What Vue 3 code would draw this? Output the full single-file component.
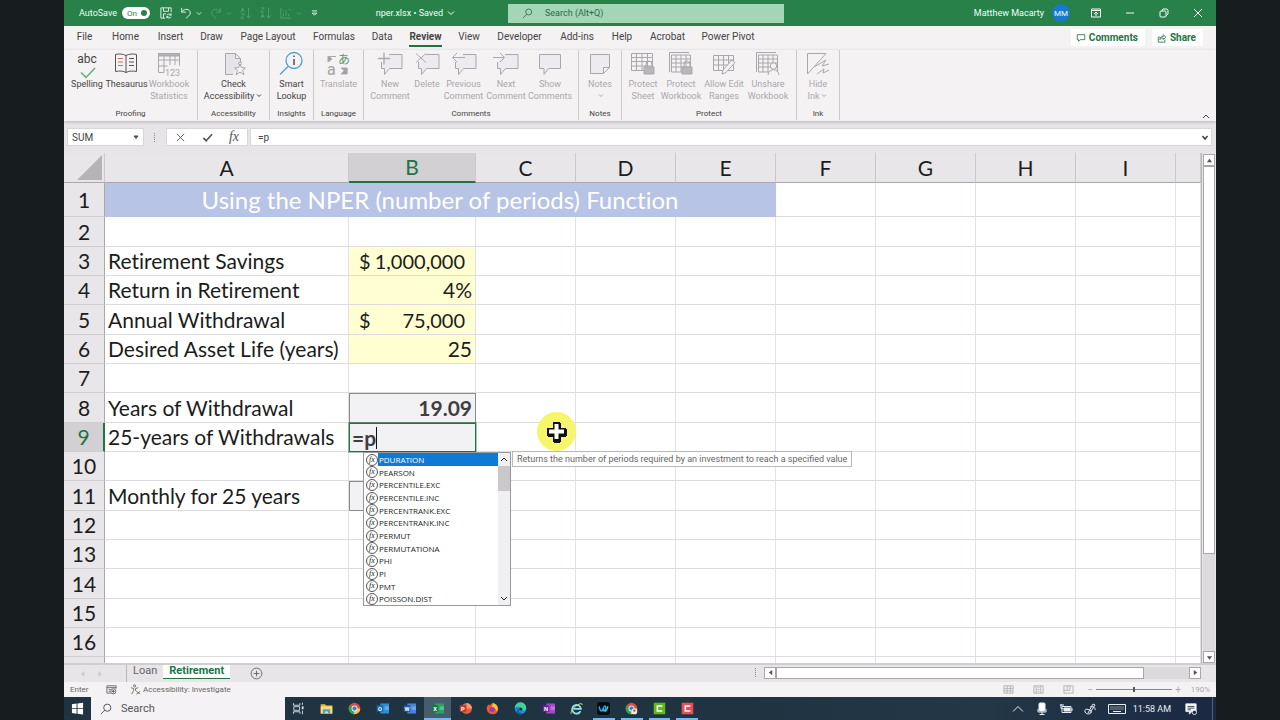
<script setup>
import { ref } from 'vue'

const tabs = ['File', 'Home', 'Insert', 'Draw', 'Page Layout', 'Formulas', 'Data', 'Review', 'View', 'Developer', 'Add-ins', 'Help', 'Acrobat', 'Power Pivot']

const bubble = '<path d="M3.500 4.500h21v14h-12l-4.500 6v-6H3.500z" fill="#ececf0"/>'
const bubbleCut = '<path d="M13 4.500h13v14H13.500l-5 6v-6H5.500V12" fill="#ececf0"/>'
const sheet = '<path d="M2.500 3.500h21v17h-21zM2.500 7.500h21M2.500 11.500h21M2.500 16h21M7.500 3.500v17M13 3.500v17M18.500 3.500v17"/>'
const lock = '<path d="M17 17v-3a3 3 0 0 1 6 0v3"/><path d="M15 17h10v7H15z" fill="#b9b7ba"/>'

const art = {
  check: '<path d="M7 4.500l5 5L21 0" stroke="#5fae7d" stroke-width="1.500"/>',
  book: '<g stroke="#555"><path d="M13 5.500C10 4 6 3.500 2.500 4.500v17c4-.8 8-.5 10.500 1 2.500-1.500 6.500-1.800 10.500-1v-17C20 3.500 16 4 13 5.500zM13 5.500v17"/><path d="M16 8.500h5M16 12h5M16 15.500h5"/></g><path d="M5 8.500h5M5 12h5M5 15.500h5" stroke="#d06a70"/>',
  stats: '<path d="M3.500 22.500v-19h21v12M3.500 10h21M3.500 16h9M9 6v16.500H3.500M15 6v9M20 6v9"/><path d="M3.500 3.500h21v2.500h-21z" fill="#b5b3b6"/><text x="10" y="26" font-size="9" fill="#aaa8ab" stroke="none">123</text>',
  access: '<path d="M13 24.500H5.500v-21h10l5 5V13M15.500 3.500v5h5" fill="#e6e4e8"/><path d="M20 14.500l1.500 3.200 4 .2-3 2.500 1.500 4.300-4-2.500-4 2.500 1.500-4.300-3-2.500 4-.2z" fill="#f5f2f3"/><circle cx="20" cy="13.500" r="1.500"/>',
  lookup: '<g stroke="#4c9fd0" stroke-width="1.300"><circle cx="16" cy="10.500" r="8"/><path d="M10 16.500L2 24.500"/></g><path d="M16 9v6M16 5.500v1.500" stroke="#444" stroke-width="1.400"/>',
  translate: '<text x="13" y="14" font-size="12" fill="#5c9771" stroke="none">あ</text><text x="2" y="25" font-size="16" fill="#a3a1a4" stroke="none">a</text><path d="M3 6.500h8M3 6l4 3-4 3zM16 18h6v6M16 24l6-6v6z" fill="#a3a1a4"/>',
  newC: bubbleCut + '<path d="M2 8.500h12M8 2.500v12" stroke-width="1.300"/>',
  delC: bubbleCut + '<path d="M3 3.500l10 9M13 3.500l-10 9"/>',
  prevC: bubbleCut + '<path d="M15 7.500H3M7 3L2.500 7.500 7 12"/>',
  nextC: bubbleCut + '<path d="M1 7.500h11M8 3l4.500 4.500L8 12"/>',
  showC: bubble,
  note: '<path d="M4.500 4.500h19v13l-6 6h-13zM23.500 17.500h-6v6" fill="#ececf0"/>',
  pSheet: sheet + lock,
  pBook: '<path d="M2.500 22V2.500H22"/><g><path d="M4.500 5h19v17h-19zM4.500 9h19M4.500 13h19M4.500 17h19M9 5v17M14 5v17M19 5v17"/></g>' + lock,
  ranges: '<path d="M3.500 5.500h20v15h-20zM3.500 10h20M3.500 15h20M8.500 5.500v15M13.500 5.500v15M18.500 5.500v15"/><path d="M12 24l1-4L22 10l3 2.500-9 10z" fill="#f5f2f3"/>',
  unshare: '<path d="M2.500 22V2.500H22"/><path d="M4.500 5h19v17h-19zM4.500 9h19M4.500 13h19M4.500 17h19M9 5v17M14 5v17M19 5v17"/><circle cx="19.500" cy="16" r="3.200" fill="#f5f2f3"/><path d="M14 25c.5-7 10.500-7 11 0" fill="#f5f2f3"/>',
  ink: '<path d="M3.500 24V3.500H22L3.500 24M10 17l12-7-4 6 7-2M13 24l7-5-1 4 6-3"/>'
}

const groups = [
  { id: 'proofing', label: 'Proofing', items: [
    { icon: 'check', lines: ['Spelling'], abc: true, on: true },
    { icon: 'book', lines: ['Thesaurus'], on: true },
    { icon: 'stats', lines: ['Workbook', 'Statistics'] }] },
  { id: 'access', label: 'Accessibility', items: [{ icon: 'access', lines: ['Check', 'Accessibility'], on: true, drop: true }] },
  { id: 'insights', label: 'Insights', items: [{ icon: 'lookup', lines: ['Smart', 'Lookup'], on: true }] },
  { id: 'language', label: 'Language', items: [{ icon: 'translate', lines: ['Translate'] }] },
  { id: 'comments', label: 'Comments', items: [
    { icon: 'newC', lines: ['New', 'Comment'] },
    { icon: 'delC', lines: ['Delete'] },
    { icon: 'prevC', lines: ['Previous', 'Comment'] },
    { icon: 'nextC', lines: ['Next', 'Comment'] },
    { icon: 'showC', lines: ['Show', 'Comments'] }] },
  { id: 'notes', label: 'Notes', items: [{ icon: 'note', lines: ['Notes', ''], drop: true }] },
  { id: 'protect', label: 'Protect', items: [
    { icon: 'pSheet', lines: ['Protect', 'Sheet'] },
    { icon: 'pBook', lines: ['Protect', 'Workbook'] },
    { icon: 'ranges', lines: ['Allow Edit', 'Ranges'] },
    { icon: 'unshare', lines: ['Unshare', 'Workbook'] }] },
  { id: 'ink', label: 'Ink', items: [{ icon: 'ink', lines: ['Hide', 'Ink'], drop: true }] }
]

const cols = ['A', 'B', 'C', 'D', 'E', 'F', 'G', 'H', 'I', '']
const rows = [
  { n: 2 },
  { n: 3, a: 'Retirement Savings', b: '1,000,000', kind: 'input', money: true },
  { n: 4, a: 'Return in Retirement', b: '4%', kind: 'input' },
  { n: 5, a: 'Annual Withdrawal', b: '75,000', kind: 'input', money: true },
  { n: 6, a: 'Desired Asset Life (years)', b: '25', kind: 'input' },
  { n: 7 },
  { n: 8, a: 'Years of Withdrawal', b: '19.09', kind: 'result' },
  { n: 9, a: '25-years of Withdrawals', kind: 'edit' },
  { n: 10 },
  { n: 11, a: 'Monthly for 25 years', kind: 'result' },
  { n: 12 }, { n: 13 }, { n: 14 }, { n: 15 }, { n: 16 }, { n: '' }
]
const functions = ['PDURATION', 'PEARSON', 'PERCENTILE.EXC', 'PERCENTILE.INC', 'PERCENTRANK.EXC', 'PERCENTRANK.INC', 'PERMUT', 'PERMUTATIONA', 'PHI', 'PI', 'PMT', 'POISSON.DIST']
const formula = ref('=p')

const letter = (back, front, ch) => `<path d="M6 2h12v14H6z" fill="${back}"/><path d="M12 6h6v5h-6z" fill="#fff" opacity=".25"/><path d="M1 4.500h9v9H1z" fill="${front}"/><text x="5.500" y="12" font-size="8" font-weight="bold" text-anchor="middle" fill="#fff">${ch}</text>`
const chrome = '<circle cx="9" cy="9" r="8" fill="#e8473c"/><path d="M9 9L2 5a8 8 0 0 0 6 12z" fill="#2fa350"/><path d="M9 9h8a8 8 0 0 1-9 8z" fill="#f8c630"/><circle cx="9" cy="9" r="4" fill="#fff"/><circle cx="9" cy="9" r="3" fill="#3c7de0"/>'
const apps = [
  { name: 'Task View', svg: '<path d="M2 1.500v3h9v-3M2 16.500v-3h9v3M2.500 6.500h8v5h-8zM14.500 1v3M14.500 12v5" fill="none" stroke="#dfe5e8" stroke-width="1.200"/><path d="M13.500 6h2.500v4h-2.500z" fill="#dfe5e8"/>' },
  { name: 'File Explorer', svg: '<path d="M1 3h6l1.500 2H17v11H1z" fill="#e9b93e"/><path d="M1 6h16v10H1z" fill="#fbdc78"/><path d="M4 16v-6h10v6h-3v-3H7v3z" fill="#4a9fd6"/>' },
  { name: 'Chrome', svg: chrome },
  { name: 'Outlook', svg: letter('#2a8fd8', '#1068b5', 'O') },
  { name: 'Word', svg: letter('#3f86dc', '#1b56b0', 'W') },
  { name: 'Excel', svg: letter('#27a468', '#127a3e', 'X'), active: true },
  { name: 'PowerPoint', svg: '<circle cx="10.500" cy="9" r="7.500" fill="#dd6240"/><path d="M10.500 1.500V9H18a7.500 7.500 0 0 0-7.500-7.500z" fill="#f29a7d"/><path d="M1 4.500h9v9H1z" fill="#bd3b20"/><text x="5.500" y="12" font-size="8" font-weight="bold" text-anchor="middle" fill="#fff">P</text>' },
  { name: 'Firefox', svg: '<path d="M9 17a8 8 0 0 1-7.500-11L4 3l1 2 4-4 2 3 3-1c5 6 3 14-5 14z" fill="#f4562d"/><path d="M10 1c6 3 8 8 5 12-2-4-4-6-7-6z" fill="#fdc52e"/><circle cx="8.500" cy="10.500" r="3.500" fill="#8b3fc4"/>' },
  { name: 'Edge', svg: '<circle cx="9" cy="9" r="8" fill="#1b8fd3"/><path d="M1 8a8 8 0 0 1 16 1c0 3-4 4-6 2 1-4-5-6-10-3z" fill="#45cf9b"/><path d="M7 9c-2 4 2 8 7 6.500A8 8 0 0 1 4 15C3 12 5 9 7 9z" fill="#0d5fae"/><circle cx="9.500" cy="10" r="2" fill="#1d3441"/>' },
  { name: 'OneNote', svg: letter('#a647cc', '#761aa3', 'N') },
  { name: 'Internet Explorer', svg: '<path d="M14.500 12.500a6 6 0 1 1 .5-3H5" fill="none" stroke="#8fdcf4" stroke-width="2.600"/><path d="M2 16.500C0 15 3 10 8 6s9-5 9-2" fill="none" stroke="#e5d878" stroke-width="1.300"/>' },
  { name: 'Webex', svg: '<rect x="0" y="0" width="18" height="18" rx="4" fill="#080d14"/><path d="M3 6c1 8 5 8 6 3s4-4 3 0-4 4-5 0" fill="none" stroke="#29a0ee" stroke-width="2"/><path d="M9 11c2 3 5 1 6-5" fill="none" stroke="#41cfbe" stroke-width="2"/>', open: true },
  { name: 'Chrome profile', svg: chrome + '<circle cx="13" cy="13" r="4" fill="#f0e6dc"/><circle cx="13" cy="12" r="1.500" fill="#8b5b3e"/>', open: true },
  { name: 'Camtasia', svg: '<path d="M1 1h16v16H1z" fill="#62b815"/><path d="M13 5.500H6v7h7" fill="none" stroke="#fff" stroke-width="2.200"/>', open: true },
  { name: 'Recorder', svg: '<path d="M1 1h16v16H1z" fill="#ea4d55"/><path d="M13 5.500H6v7h7" fill="none" stroke="#fff" stroke-width="2.200"/>', open: true }
]
</script>

<template>
  <div class="desktop">
    <main class="window">
      <header class="titlebar">
        <div class="quick">
          <label class="autosave">AutoSave
            <span class="switch"><input type="checkbox" checked />On<i></i></span>
          </label>
          <button aria-label="Save"><svg viewBox="0 0 14 14"><path d="M1 1h12v5M1 1v12h5M4 1v4h6V1M4 13V8h3M8 9.500a3 3 0 0 1 5 0M13 7.500v2h-2M13 11.500a3 3 0 0 1-5 0M8 13v-2h2" /></svg></button>
          <button aria-label="Undo" class="undo"><svg viewBox="0 0 14 14"><path d="M2 1v5h5M2 6c3-5 10-4 10 1 0 3-3 4-5 6" /></svg></button>
          <button aria-label="Undo list" class="mini"><svg viewBox="0 0 8 8"><path d="M1 3l3 3 3-3" /></svg></button>
          <button aria-label="Redo" class="faint"><svg viewBox="0 0 14 14"><path d="M12 1v5H7M12 6C9 1 2 2 2 7c0 3 3 4 5 6" /></svg></button>
          <button aria-label="Redo list" class="mini faint"><svg viewBox="0 0 8 8"><path d="M1 3l3 3 3-3" /></svg></button>
          <button aria-label="Sort ascending" class="faint"><svg viewBox="0 0 14 14"><path d="M1 6l2-5 2 5M2 4h2M1 8h4l-4 5h4M10 1v12M7.500 10l2.500 3 2.500-3" /></svg></button>
          <button aria-label="Sort descending" class="faint"><svg viewBox="0 0 14 14"><path d="M1 1h4L1 6h4M1 13l2-5 2 5M2 11h2M10 1v12M7.500 10l2.500 3 2.500-3" /></svg></button>
          <button aria-label="Chart" class="faint"><svg viewBox="0 0 14 14"><path d="M1 1v12h12M4 11V7M7 11V4M10 11V8M4 4h1M10 3h2" /></svg></button>
          <button aria-label="Chart list" class="mini faint"><svg viewBox="0 0 8 8"><path d="M1 3l3 3 3-3" /></svg></button>
          <button aria-label="Customize toolbar" class="custom"><svg viewBox="0 0 8 8"><path d="M1 1h6M1.500 3.500h5L4 6z" /></svg></button>
          <button class="filename">nper.xlsx • Saved <svg viewBox="0 0 8 8"><path d="M1 2.500l3 3 3-3" /></svg></button>
        </div>
        <label class="search">
          <svg viewBox="0 0 14 14"><circle cx="8.500" cy="5" r="3.800" /><path d="M6 8l-5 5" /></svg>
          <input type="text" placeholder="Search (Alt+Q)" aria-label="Search" />
        </label>
        <div class="account">
          <span>Matthew Macarty</span><b class="avatar">MM</b>
          <button aria-label="Ribbon options"><svg viewBox="0 0 12 12"><path d="M1.500 2h9v8h-9zM1 3.500h10M6 9V5M4 7l2-2 2 2" /></svg></button>
          <button aria-label="Minimize"><svg viewBox="0 0 12 12"><path d="M2 6h8" /></svg></button>
          <button aria-label="Restore"><svg viewBox="0 0 12 12"><rect x="2" y="4" width="6" height="6" rx="1" /><path d="M4 4l1-2h4l1 1v4L8 9" /></svg></button>
          <button aria-label="Close"><svg viewBox="0 0 12 12"><path d="M2 2l8 8M10 2l-8 8" /></svg></button>
        </div>
      </header>

      <nav class="tabs">
        <div class="tablist">
          <a v-for="t in tabs" :key="t" href="#" :class="{ current: t === 'Review' }">{{ t }}</a>
        </div>
        <div class="collab">
          <button><svg viewBox="0 0 12 12"><path d="M1.500 2h9v6H5L3 10V8H1.500z" /></svg>Comments</button>
          <button><svg viewBox="0 0 12 12"><path d="M4 5H1.500v6h8V8M3.500 8c0-3 2-4 4-4V2l3 3-3 3V6c-2 0-3 0-4 2z" /></svg>Share</button>
        </div>
      </nav>

      <section class="ribbon">
        <div v-for="g in groups" :key="g.id" class="group" :class="g.id">
          <div class="items">
            <button v-for="it in g.items" :key="it.icon" :class="{ on: it.on }">
              <span v-if="it.abc" class="abc">abc<svg viewBox="0 0 26 10" v-html="art[it.icon]"></svg></span>
              <svg v-else class="big" viewBox="0 0 28 28" v-html="art[it.icon]"></svg>
              <span v-for="(l, i) in it.lines" :key="i" class="line">{{ l }}<svg v-if="it.drop && i === 1" class="drop" viewBox="0 0 8 8"><path d="M2 2.500l2 2 2-2" /></svg></span>
            </button>
          </div>
          <div class="caption">{{ g.label }}</div>
        </div>
        <button class="collapse" aria-label="Collapse ribbon"><svg viewBox="0 0 8 8"><path d="M1 6l3-3 3 3" /></svg></button>
      </section>

      <section class="formulabar">
        <div class="namebox"><input type="text" value="SUM" aria-label="Name box" /><svg viewBox="0 0 8 8"><path d="M2 3h4L4 5.500z" fill="#666" /></svg></div>
        <span class="grip"></span>
        <div class="fxbuttons">
          <button aria-label="Cancel"><svg viewBox="0 0 12 12"><path d="M2 2l8 8M10 2l-8 8" /></svg></button>
          <button aria-label="Enter"><svg viewBox="0 0 12 12"><path d="M1.500 6.500L4.500 9.500 11 2.500" stroke-width="1.800" /></svg></button>
          <button aria-label="Insert function" class="fx">fx</button>
        </div>
        <div class="entry"><input v-model="formula" type="text" aria-label="Formula" /><svg viewBox="0 0 8 8"><path d="M1.500 3l2.500 3 2.500-3" stroke-width="1.600" /></svg></div>
      </section>

      <section class="sheetarea">
        <div class="gridview">
          <table>
            <colgroup><col class="c-head" /><col class="c-a" /><col class="c-b" /><col v-for="i in 7" :key="i" class="c-std" /><col /></colgroup>
            <thead>
              <tr><th class="corner"><i></i></th><th v-for="c in cols" :key="c" :class="{ sel: c === 'B' }">{{ c }}</th></tr>
            </thead>
            <tbody>
              <tr class="first"><th>1</th><td colspan="5" class="banner">Using the NPER (number of periods) Function</td><td v-for="i in 5" :key="i"></td></tr>
              <tr v-for="r in rows" :key="r.n">
                <th :class="{ sel: r.n === 9 }">{{ r.n }}</th>
                <td>{{ r.a }}</td>
                <td :class="r.kind">
                  <div v-if="r.money" class="money"><span>$</span><span>{{ r.b }}</span></div>
                  <template v-else-if="r.kind === 'edit'">
                    <div class="editing">=p<i class="caret"></i></div>
                    <div class="popup">
                      <ul role="listbox" aria-label="Functions">
                        <li v-for="(f, i) in functions" :key="f" role="option" :aria-selected="i === 0"><i>fx</i><span>{{ f }}</span></li>
                      </ul>
                      <div class="popscroll">
                        <svg viewBox="0 0 8 8"><path d="M1 5.500l3-3 3 3" /></svg>
                        <b></b>
                        <svg viewBox="0 0 8 8"><path d="M1 2.500l3 3 3-3" /></svg>
                      </div>
                    </div>
                    <div class="tip" role="tooltip">Returns the number of periods required by an investment to reach a specified value</div>
                    <div class="pointer"><svg viewBox="0 0 22 22"><path d="M7 1h7v1h1v5h5v1h1v7h-1v1h-5v5h-1v1H8v-1H7v-5H2v-1H1V7h6z" fill="#111" /><path d="M8.500 3h4v5.500H18v4h-5.500V18h-4v-5.500H3v-4h5.500z" fill="#fff" /></svg></div>
                  </template>
                  <template v-else>{{ r.b }}</template>
                </td>
                <td v-for="i in 8" :key="i"></td>
              </tr>
            </tbody>
          </table>
        </div>
        <div class="vscroll">
          <button aria-label="Scroll up"><svg viewBox="0 0 8 8"><path d="M1 6h6L4 2z" /></svg></button>
          <div class="track"><b></b></div>
          <button aria-label="Scroll down"><svg viewBox="0 0 8 8"><path d="M1 2.500h6L4 6.500z" /></svg></button>
        </div>
      </section>

      <section class="sheetbar">
        <div class="arrows"><svg viewBox="0 0 8 8"><path d="M5.500 1v6L2 4z" /></svg><svg viewBox="0 0 8 8"><path d="M2.500 1v6L6 4z" /></svg></div>
        <a href="#" class="sheet">Loan</a>
        <a href="#" class="sheet active">Retirement</a>
        <button class="add" aria-label="New sheet"><svg viewBox="0 0 14 14"><circle cx="7" cy="7" r="5.800" /><path d="M7 4v6M4 7h6" /></svg></button>
        <div class="hscroll">
          <span class="grip"></span>
          <button aria-label="Scroll left"><svg viewBox="0 0 8 8"><path d="M6 1v6L2 4z" /></svg></button>
          <div class="track"><b></b></div>
          <button aria-label="Scroll right"><svg viewBox="0 0 8 8"><path d="M2 1v6L6 4z" /></svg></button>
        </div>
      </section>

      <footer class="status">
        <span class="mode">Enter</span>
        <svg class="macro" viewBox="0 0 12 12"><path d="M1 2h10v3M1 2v8h4M1 4h10M3 6h2M3 8h2" /><circle cx="8" cy="8" r="2.800" /><circle cx="8" cy="8" r="1" fill="#555" /></svg>
        <svg class="person" viewBox="0 0 12 12"><circle cx="5" cy="2" r="1.200" /><path d="M1 4l3 1v2l-2 4M9 4L6 5v2l1 1M7 8l4 3M11 8l-4 3" /></svg>
        <span class="a11y">Accessibility: Investigate</span>
        <div class="views">
          <svg viewBox="0 0 12 12"><path d="M1 2h10v8H1zM1 5h10M1 7.500h10M4.500 2v8M8 2v8" /></svg>
          <svg viewBox="0 0 12 12"><path d="M1 2h10v8H1zM3.500 2v8M8.500 2v8M5 4h2M5 6h2M5 8h2" /></svg>
          <svg viewBox="0 0 12 12"><path d="M1 2h10v8H1zM4.500 2v5h3V2M1 7h3.500" /></svg>
        </div>
        <span class="sign">−</span><input type="range" min="0" max="100" value="50" aria-label="Zoom" /><span class="sign">+</span>
        <span class="pct">190%</span>
      </footer>

      <div class="taskbar">
        <button class="start" aria-label="Start"><svg viewBox="0 0 14 14"><path d="M1 2.500l5-.8v5H1zM7 1.600L13 .8v5.900H7zM1 7.600h5v5l-5-.8zM7 7.600h6v5.900l-6-.9z" fill="#fff" /></svg></button>
        <label class="tasksearch"><svg viewBox="0 0 14 14"><circle cx="8.500" cy="5.500" r="4.200" /><path d="M5.500 8.500L1 13" /></svg><input type="text" placeholder="Search" aria-label="Search Windows" /></label>
        <div class="apps">
          <button v-for="a in apps" :key="a.name" :aria-label="a.name" :class="{ active: a.active, open: a.open }"><svg viewBox="0 0 18 18" v-html="a.svg"></svg></button>
        </div>
        <div class="tray">
          <svg viewBox="0 0 12 12"><path d="M1 8.500l5-5 5 5" /></svg>
          <svg viewBox="0 0 12 12"><rect x="3" y="0" width="6" height="8" rx="1" fill="#fff" /><path d="M2 6v3h8V6M6 9v3M3.500 11.500h5" /></svg>
          <svg viewBox="0 0 12 12"><path d="M4 5h6v3H4z" fill="#e9eef0" /><path d="M2 6V3.500h9v6H2V7M12 5v3M0 2h4M1 1v4c0 2 2 2 2 0" /></svg>
          <svg viewBox="0 0 12 12"><path d="M4 10L9 1l2 1-5 8M1 9c-1-4 4-3 6-1s-4 5-6 1M6 4c3-1 6 1 5 3" /></svg>
          <svg class="kb" viewBox="0 0 18 12"><path d="M.5 1.500h17v9H.5zM5 8.500h8" /><path d="M2.500 4h13M2.500 6h13" stroke-dasharray="1 1" /></svg>
          <time>11:58 AM</time>
          <svg class="notice" viewBox="0 0 14 14"><path d="M1 1h12v9H8l-3 3v-3H1z" fill="#fff" /><path d="M3 4h8M3 6h8M3 8h4" stroke="#1b2b44" /><circle cx="11" cy="11" r="2.500" fill="#1b2b44" /></svg>
        </div>
      </div>
    </main>
  </div>
</template>

<style>
body { background: #171c1f; }
</style>

<style scoped>
* { box-sizing: border-box; }
.desktop { min-height: 100vh; padding: 0 5%; display: flex; font-family: Roboto, "Noto Sans", sans-serif; font-size: 9px; color: #444; }
.window { flex: 1; min-width: 0; display: flex; flex-direction: column; height: 100vh; background: #e7e5e8; overflow: hidden; }
button { border: 0; background: none; padding: 0; margin: 0; font: inherit; color: inherit; display: flex; align-items: center; justify-content: center; }
input { border: 0; background: none; padding: 0; margin: 0; font: inherit; color: inherit; min-width: 0; outline: 0; }
a { color: inherit; text-decoration: none; }
svg { fill: none; stroke: currentColor; width: 12px; height: 12px; flex: none; display: block; overflow: visible; }

.titlebar { height: 26px; flex: none; background: #278148; color: #f2fff6; display: grid; grid-template-columns: 444px 24% 1fr; align-items: center; }
.quick { display: flex; align-items: center; padding-left: 15px; }
.autosave { display: flex; align-items: center; justify-content: space-between; width: 71px; margin-right: 10px; }
.switch { display: flex; align-items: center; justify-content: space-between; width: 28px; height: 12px; padding: 0 3px 0 5px; border-radius: 6px; background: #fff; color: #278148; font-size: 8px; position: relative; }
.switch input { position: absolute; inset: 0; opacity: 0; }
.switch i { width: 6px; height: 6px; border-radius: 50%; background: #278148; }
.undo { margin-left: 8px; }
.quick .mini svg { width: 6px; height: 6px; }
.faint { opacity: .25; margin-left: 8px; }
.mini, .mini.faint { margin-left: 4px; }
.quick .custom svg { width: 7px; height: 7px; }
.custom { margin-left: 9px; }
.filename { margin-left: auto; margin-right: 53px; gap: 4px; white-space: nowrap; }
.quick .filename svg { width: 8px; height: 8px; }
.search { background: #a5d5b7; color: #2b6b44; height: 19px; display: flex; align-items: center; gap: 12px; padding-left: 14px; }
.search svg { width: 11px; height: 11px; }
.search input { flex: 1; }
.search input::placeholder { color: #2b6b44; opacity: 1; }
.account { display: flex; align-items: center; justify-content: flex-end; padding-right: 12px; gap: 22px; white-space: nowrap; }
.avatar { width: 18px; height: 18px; border-radius: 50%; background: #1779d0; display: grid; place-items: center; font-weight: 400; font-size: 8px; margin-left: -14px; margin-right: -2px; }

.tabs { height: 24px; flex: none; background: #f5f2f3; display: flex; justify-content: space-between; }
.tablist { display: grid; grid-template-columns: 35px 47px 43px 39px 74px 58px 38px 49px 38px 63px 52px 38px 53px 68px; padding-left: 3px; font-size: 10px; line-height: 22px; white-space: nowrap; }
.tablist a { display: flex; justify-content: center; height: 21px; }
.current { font-weight: 700; position: relative; }
.current::after { content: ""; position: absolute; left: 8px; right: 8px; bottom: 0; height: 2px; background: #217346; }
.collab { display: flex; gap: 7px; padding: 3px 13px 4px 0; font-size: 10px; font-weight: 700; color: #217346; }
.collab button { background: #fff; padding: 0 7px 0 5px; gap: 3px; }
.collab svg { width: 10px; height: 10px; }

.ribbon { height: 71px; flex: none; background: #f5f2f3; display: flex; position: relative; box-shadow: 0 1px 3px #b5b3b6; z-index: 1; }
.group { height: 70px; border-right: 1px solid #cbc9cc; display: flex; flex-direction: column; flex: none; }
.group .items { display: grid; flex: 1; }
.items button { flex-direction: column; justify-content: flex-start; color: #aaa8ab; white-space: nowrap; line-height: 12px; font-size: 9px; min-width: 0; }
.items button.on { color: #444; }
.items .big { width: 28px; height: 28px; color: #a9a7ab; font-family: Roboto, "Noto Sans CJK JP", sans-serif; }
.abc { font-size: 12px; height: 28px; line-height: 18px; display: flex; flex-direction: column; align-items: center; }
.abc svg { width: 26px; height: 10px; }
.line { display: flex; align-items: center; height: 12px; }
.drop { width: 8px; height: 8px; margin-left: 1px; }
.caption { text-align: center; font-size: 8px; line-height: 12px; height: 12px; }
.proofing { width: 134px; }
.proofing .items { grid-template-columns: 40px 39px 46px; padding-left: 3px; }
.access { width: 72px; }
.insights { width: 44px; }
.language { width: 50px; }
.comments { width: 215px; }
.comments .items { grid-template-columns: 38px 36px 37px 48px 40px; padding-left: 7px; }
.notes { width: 43px; }
.protect { width: 175px; }
.protect .items { grid-template-columns: 38px 38px 48px 40px; padding-left: 2px; }
.ink { width: 43px; }
.collapse { margin-left: auto; align-self: flex-end; padding: 0 6px 1px 0; }
.collapse svg { width: 8px; height: 8px; }

.formulabar { flex: none; height: 32px; padding: 7px 4px 7px 3px; display: flex; align-items: stretch; font-size: 10px; }
.formulabar svg { width: 8px; height: 8px; }
.namebox, .fxbuttons, .entry { background: #fff; border: 1px solid #d8d6d9; display: flex; align-items: center; }
.namebox { width: 77px; padding: 0 3px 0 4px; justify-content: space-between; }
.namebox input { width: 50px; }
.grip { width: 3px; height: 9px; align-self: center; border-left: 1px dotted #888; }
.formulabar .grip { margin: 0 9px 0 10px; }
.fxbuttons { width: 82px; justify-content: space-around; margin-right: 2px; color: #555; }
.formulabar .fxbuttons svg { width: 11px; height: 11px; }
.fx { font-family: "Liberation Serif", serif; font-style: italic; font-size: 14px; }
.entry { flex: 1; padding: 0 2px 0 7px; }
.entry input { flex: 1; }

.sheetarea { flex: 1; min-height: 0; display: flex; background: #e8e6e9; }
.gridview { flex: 1; min-width: 0; overflow: hidden; background: #fff; border-right: 1px solid #b5b3b6; }
table { width: 100%; table-layout: fixed; border-collapse: separate; border-spacing: 0; font-family: Lato, sans-serif; font-variant-ligatures: none; font-size: 21px; line-height: 24px; color: #1c1c1c; }
.c-head { width: 41px; }
.c-a { width: 244px; }
.c-b { width: 127px; }
.c-std { width: 100px; }
th { font-weight: 400; background: #e8e6e9; padding: 0; text-align: center; }
thead th { height: 30px; border-bottom: 1px solid #a9a8ae; border-right: 1px solid #cbc9cc; }
thead th.sel { background: #d2d0d3; color: #217346; border-bottom: 2px solid #217346; }
.corner i { display: block; margin: 0 2px 0 auto; border-left: 25px solid transparent; border-bottom: 25px solid #b5b3b6; width: 0; }
tbody tr { height: 29px; }
tbody tr:nth-child(3n+2) { height: 30px; }
tbody tr.first { height: 34px; }
tbody th { border-right: 1px solid #a9a8ae; border-bottom: 1px solid #cfcdd0; }
tbody th.sel { background: #d2d0d3; color: #217346; border-right: 2px solid #217346; }
td { padding: 0 3px; border-right: 1px solid #e2e0e5; border-bottom: 1px solid #dddbe0; white-space: nowrap; }
.banner { background: #b7c4e6; color: #fff; text-align: center; font-size: 24px; border-color: #b7c4e6; }
.input { background: #ffffd2; text-align: right; }
.money { display: flex; justify-content: space-between; padding: 0 7px; font-size: 20px; }
.result { background: #f2f1f4; color: #3f3f3f; font-weight: 700; text-align: right; border: 1px solid #8b8a8d; }
.edit { background: #f2f1f4; color: #3f3f3f; font-weight: 700; position: relative; padding: 0 2px; border: 1px solid #217346; outline: 1px solid #21734666; }
.editing { display: flex; align-items: center; }
.caret { width: 1px; height: 22px; background: #111; }
.popup { position: absolute; z-index: 2; left: 13px; top: 28px; width: 148px; display: flex; background: #fff; border: 1px solid #9a989b; font: 8px/12px "Open Sans", "Noto Sans", sans-serif; color: #222; }
.popup ul { flex: 1; list-style: none; margin: 0; padding: 0; }
.popup li { height: 13px; line-height: 13px; display: flex; align-items: center; padding-left: 2px; }
.popup li:nth-child(3n+2) { height: 12px; }
.popup li i { width: 12px; height: 12px; border: 1px solid #555; border-radius: 50%; font: italic 8px/9px "Liberation Serif", serif; text-align: center; flex: none; background: #fff; }
.popup li span { flex: 1; padding-left: 1px; }
.popup li[aria-selected="true"] span { background: #0f7ad5; color: #fff; }
.popscroll { width: 12px; background: #f0eff1; display: flex; flex-direction: column; align-items: center; }
.popscroll svg { width: 8px; height: 13px; color: #222; }
.popscroll b { width: 12px; height: 25px; background: #cac8cb; margin-bottom: auto; }
.tip { position: absolute; z-index: 2; left: 162px; top: 27px; height: 16px; padding: 0 4px; background: #fff; border: 1px solid #b9b7ba; font: 9px/14px Roboto, "Noto Sans", sans-serif; color: #666; }
.pointer { position: absolute; z-index: 1; left: 187px; top: -12px; width: 39px; height: 39px; border-radius: 50%; background: #f6f56c; display: grid; place-items: center; }
.pointer svg { width: 22px; height: 22px; stroke: none; }

.vscroll { width: 14px; flex: none; display: flex; flex-direction: column; padding: 1px 1px 0 1px; }
.vscroll button, .hscroll button { width: 12px; height: 12px; background: #fff; border: 1px solid #a9a7aa; flex: none; color: #555; }
.vscroll svg, .hscroll svg { width: 7px; height: 7px; fill: #555; stroke: none; }
.track { flex: 1; background: #dcdadd; }
.track b { display: block; background: #fff; border: 1px solid #a9a7aa; }
.vscroll .track b { height: 80%; }

.sheetbar { height: 19px; flex: none; border-top: 2px solid #cfcdd0; display: flex; align-items: stretch; font-size: 11px; line-height: 12px; color: #666; }
.arrows { width: 63px; display: flex; align-items: center; gap: 9px; padding-left: 15px; border-right: 1px solid #b9b7ba; }
.arrows svg { width: 8px; height: 8px; fill: #ccc; stroke: none; }
.sheet { padding: 0 6px; }
.sheet.active { padding: 0 6px; background: #fff; color: #217346; font-weight: 700; height: 14px; border-bottom: 1px solid #217346; }
.add { margin-left: 20px; }
.add svg { width: 13px; height: 13px; }
.hscroll { margin-left: auto; width: 40%; display: flex; align-items: center; padding: 0 15px 2px 0; }
.hscroll .grip { margin-right: 6px; }
.hscroll .track { height: 12px; }
.hscroll .track b { height: 12px; width: 89%; }

.status { height: 15px; flex: none; background: #f5f2f3; display: flex; align-items: center; font-size: 8px; padding: 0 6px; color: #666; white-space: nowrap; }
.mode { width: 36px; }
.macro { margin-right: 13px; }
.person { margin-right: 2px; }
.status svg { width: 11px; height: 11px; }
.views { display: flex; gap: 19px; margin-left: auto; margin-right: 12px; color: #b3b1b4; }
.sign { color: #aaa; width: 8px; text-align: center; font-size: 10px; }
.status input { appearance: none; width: 76px; height: 10px; margin: 0 2px; background: linear-gradient(#888, #888) center / 100% 1px no-repeat; }
.status input::-webkit-slider-thumb { appearance: none; width: 2px; height: 5px; background: #555; }
.pct { width: 28px; text-align: right; color: #aaa; }

.taskbar { height: 23px; flex: none; display: flex; background: linear-gradient(90deg, #1f3341 60%, #233747 80%, #1b2842); color: #e9eef0; }
.start { width: 27px; }
.start svg { width: 13px; height: 13px; stroke: none; }
.tasksearch { width: 194px; background: #f4f2f4; color: #444; display: flex; align-items: center; gap: 9px; padding-left: 9px; font-size: 11px; }
.tasksearch input { flex: 1; }
.tasksearch input::placeholder { color: #555; opacity: 1; }
.apps { display: grid; grid-template-columns: repeat(15, 1fr); width: 416px; }
.apps button { border-bottom: 2px solid transparent; padding-top: 2px; margin: 0 3px; }
.apps svg { width: 13px; height: 13px; stroke: none; }
.apps .active { background: #465d6b; margin: 0; border-color: #76b9ed; }
.apps .open { border-color: #76b9ed; }
.tray { margin-left: auto; display: flex; align-items: center; gap: 12px; margin-right: 3px; padding-right: 15px; border-right: 1px solid #56627a; white-space: nowrap; }
.tray .kb { width: 18px; margin-right: -5px; }
.tray time { margin-right: 2px; }
</style>
